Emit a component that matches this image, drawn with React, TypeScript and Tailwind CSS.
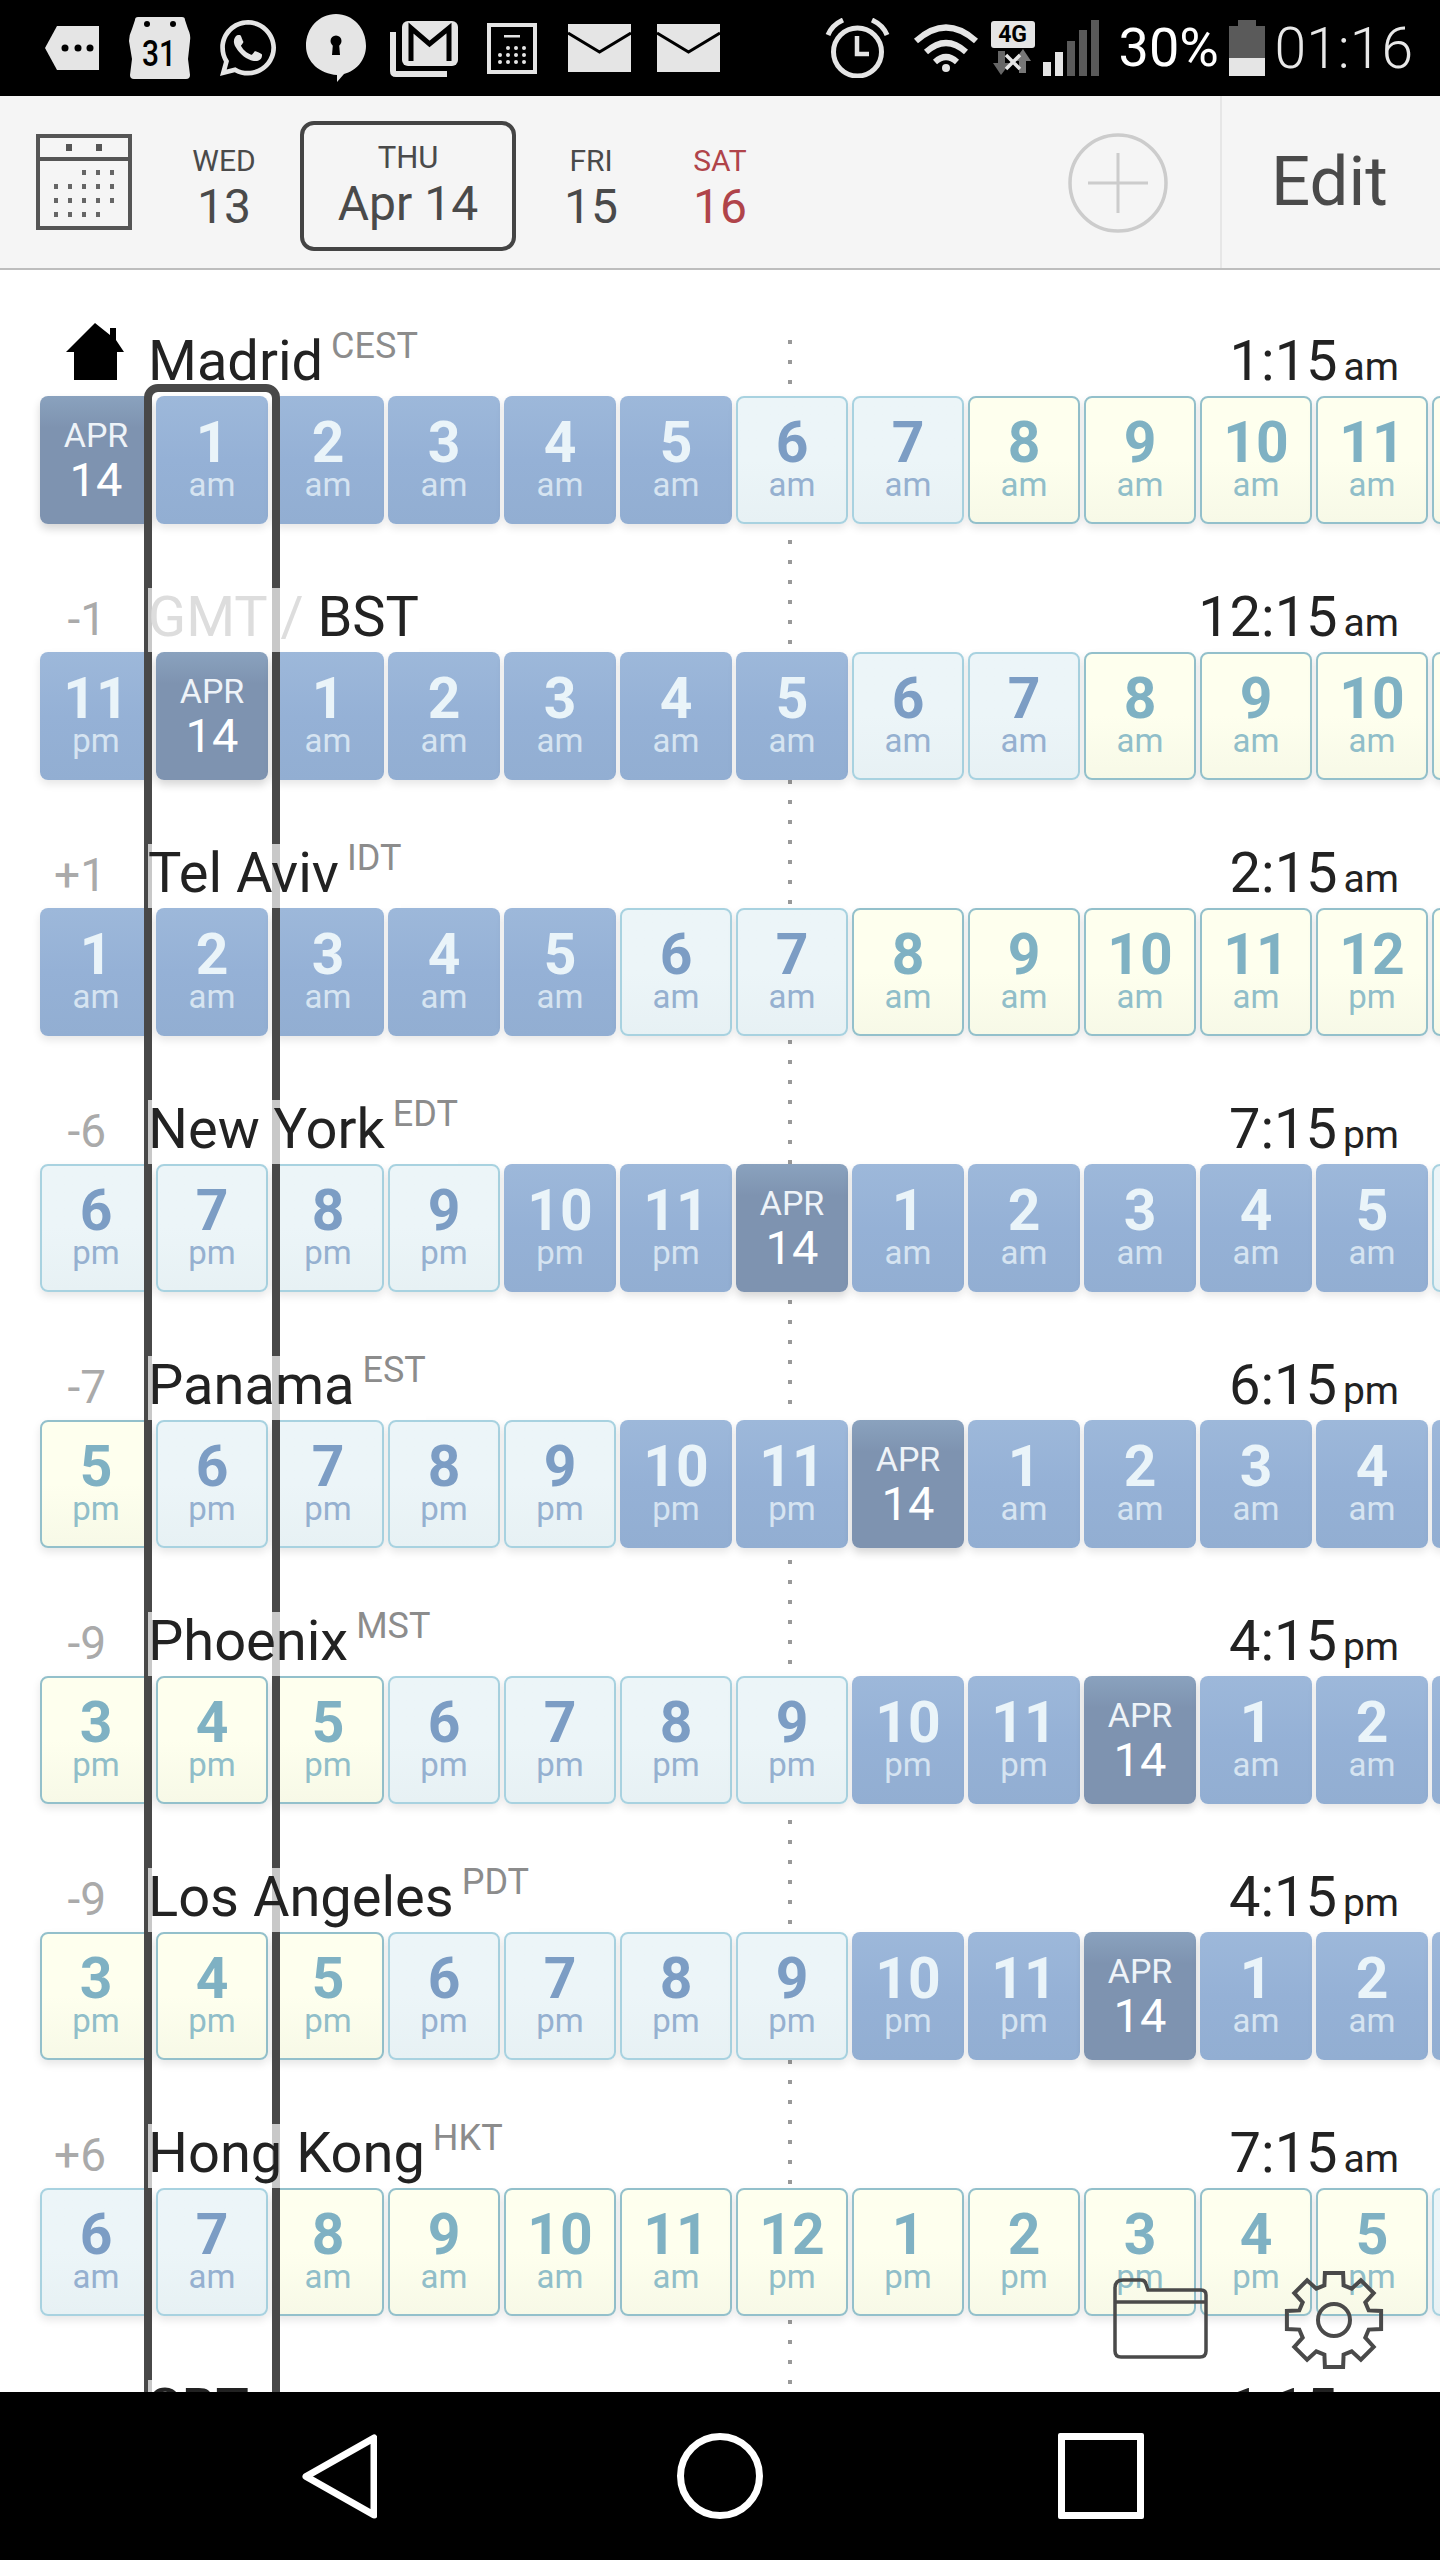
import { FaWhatsapp } from 'react-icons/fa';

const ROBOTO = { fontFamily: 'Roboto, "Noto Sans", sans-serif' };

interface CellProps {
  hour: number;
}

// hour is 0-23 local time for the column
function Cell({ hour }: CellProps) {
  const h = ((hour % 24) + 24) % 24;
  if (h === 0) {
    return (
      <div className="relative z-10 flex flex-col items-center w-[112px] h-[128px] shrink-0 rounded-[8px] bg-gradient-to-b from-[#8aa2be] to-[#7e93b0] to-25% shadow-[0_5px_9px_rgba(0,0,0,0.16)] text-white">
        <span className="text-[34px] leading-[38px] mt-[20px] text-[#eef3f8]">APR</span>
        <span className="text-[47px] leading-[46px] mt-[3px]">14</span>
      </div>
    );
  }
  const label = h % 12 === 0 ? 12 : h % 12;
  const suffix = h < 12 ? 'am' : 'pm';
  const isNight = h < 6 || h >= 22;
  const isDay = h >= 8 && h < 18;

  let box = 'border-[#a8d2e0] from-[#ecf5f8] via-[#ecf5f8] to-[#e7f1f4]';
  let num = 'text-[#7c9dc4]';
  let sub = 'text-[#95b0d0]';
  if (isNight) {
    box = 'border-transparent bg-origin-border from-[#9db8da] via-[#95b1d6] to-[#92aed2]';
    num = 'text-[#eaf4f9]';
    sub = 'text-[#d6e4f1]';
  } else if (isDay) {
    box = 'border-[#93c0cb] from-[#feffee] via-[#feffee] to-[#f7f9e7]';
    num = 'text-[#7fb1c3]';
    sub = 'text-[#90bec9]';
  }

  return (
    <div
      className={`relative z-10 flex flex-col items-center w-[112px] h-[128px] shrink-0 rounded-[8px] border-2 bg-gradient-to-b shadow-[0_4px_8px_rgba(0,0,0,0.1)] ${box}`}
    >
      <span className={`absolute top-[13px] text-[57px] leading-[64px] font-bold ${num}`}>{label}</span>
      <span className={`absolute top-[67px] text-[33px] leading-[40px] ${sub}`}>{suffix}</span>
    </div>
  );
}

function HomeIcon() {
  return (
    <svg viewBox="0 0 58 57" className="w-[58px] h-[57px] -mt-[9px]">
      <path d="M29 0 L44 12 V5 H50 V17 L58 29 H51 V57 H8 V29 H0 Z" fill="#000" />
    </svg>
  );
}

interface RowProps {
  offset?: string;
  name: React.ReactNode;
  zone?: string;
  time: string;
  period: string;
  startHour: number;
  home?: boolean;
}

function ZoneRow({ offset, name, zone, time, period, startHour, home }: RowProps) {
  const hours = Array.from({ length: 13 }, (_, i) => startHour + i);
  return (
    <div className="h-[256px] shrink-0">
      <div className="flex h-16 items-start">
        <div className="w-[148px] shrink-0 flex justify-end pr-[42px] text-[46px] leading-[62px] text-[#aaaaaa] relative z-30">
          {home ? (
            <span className="mr-[-18px]">
              <HomeIcon />
            </span>
          ) : (
            offset
          )}
        </div>
        <div className={`relative z-30 flex h-16 ${home ? '' : 'bg-white/70'}`}>
          <span className="text-[56px] leading-[59px] text-[#222222] whitespace-nowrap">{name}</span>
          {zone && <span className="ml-[8px] -mt-[8px] text-[36px] leading-[44px] text-[#8c8c8c]">{zone}</span>}
        </div>
        <div className="relative z-30 ml-auto pr-[41px] flex items-baseline text-[#222222]">
          <span className="text-[56px] leading-[59px]">{time}</span>
          <span className="ml-[6px] text-[39px] leading-[59px]">{period}</span>
        </div>
      </div>
      <div className="flex gap-1 pl-10 w-[1600px]">
        {hours.map((h) => (
          <Cell key={h} hour={h} />
        ))}
      </div>
    </div>
  );
}

function StatusBar() {
  const light = '#e5e5e5';
  return (
    <div className="flex items-center h-24 bg-black pl-[45px] pr-[27px] shrink-0 text-[#e8e8e8]">
      <svg viewBox="0 0 54 44" className="w-[54px] h-[44px]">
        <path d="M12 0H54V44H12L0 22Z" fill={light} />
        <circle cx="20" cy="22" r="3.500" fill="#000" />
        <circle cx="33" cy="22" r="3.500" fill="#000" />
        <circle cx="45" cy="22" r="3.500" fill="#000" />
      </svg>
      <svg viewBox="0 0 62 62" className="w-[62px] h-[62px] ml-[30px]">
        <path d="M6 3Q6 0 9 0H53Q56 0 56 3L59 12Q62 18 61 24L59 42L61 58Q61 62 57 62H5Q1 62 1 58L3 42L0 24Q0 18 3 12Z" fill={light} />
        <circle cx="18" cy="7" r="3" fill="#000" />
        <circle cx="44" cy="7" r="3" fill="#000" />
        <text x="30" y="49" textAnchor="middle" fontSize="37" fontWeight="500" fill="#000" textLength="34" lengthAdjust="spacingAndGlyphs" style={ROBOTO}>31</text>
      </svg>
      <FaWhatsapp className="w-[62px] h-[64px] ml-[26px]" style={{ color: light }} />
      <svg viewBox="0 0 60 68" className="w-[60px] h-[68px] ml-[27px]">
        <path d="M30 0C47 0 60 14 60 32C60 46 50 57 38 60L31 68V61C14 60 0 48 0 32C0 14 13 0 30 0Z" fill={light} />
        <circle cx="30" cy="27" r="5.500" fill="#000" />
        <path d="M27 29H33L34 41H26Z" fill="#000" />
      </svg>
      <svg viewBox="0 0 68 57" className="w-[68px] h-[57px] ml-[24px]">
        <path d="M3 12V51Q3 54 6 54H57" fill="none" stroke={light} strokeWidth="6" />
        <rect x="12" y="1" width="56" height="45" rx="6" fill={light} />
        <path d="M21 41V8L39.500 24L59 8V41" fill="none" stroke="#000" strokeWidth="5" />
      </svg>
      <svg viewBox="0 0 50 51" className="w-[50px] h-[51px] ml-[29px]">
        <rect x="2" y="2" width="46" height="47" fill="none" stroke={light} strokeWidth="4" />
        <rect x="17" y="12" width="16" height="2.500" fill={light} />
        {[0, 1, 2].map((r) =>
          [0, 1, 2, 3].map((c) =>
            r === 0 && c === 0 ? null : (
              <circle key={`${r}-${c}`} cx={13 + c * 8} cy={25 + r * 7} r="2" fill={light} />
            ),
          ),
        )}
      </svg>
      {[0, 1].map((i) => (
        <svg key={i} viewBox="0 0 63 48" className={`w-[63px] h-[48px] ${i === 0 ? 'ml-[31px]' : 'ml-[26px]'}`}>
          <rect width="63" height="48" fill={light} />
          <path d="M0 9L31.500 28L63 9" fill="none" stroke="#000" strokeWidth="3" />
        </svg>
      ))}
      <svg viewBox="0 0 65 60" className="w-[65px] h-[60px] ml-auto">
        <circle cx="32.500" cy="34" r="24" fill="none" stroke={light} strokeWidth="5" />
        <path d="M32 18V36H44" fill="none" stroke={light} strokeWidth="4.500" />
        <path d="M3 17Q7 7 18 2M62 17Q58 7 47 2" fill="none" stroke={light} strokeWidth="5" />
      </svg>
      <svg viewBox="0 0 66 48" className="w-[66px] h-[48px] ml-[23px]">
        <path d="M3 17Q33 -10 63 17M13 28Q33 10 53 28M22 38Q33 28 44 38" fill="none" stroke={light} strokeWidth="6" />
        <circle cx="33" cy="44" r="4" fill={light} />
      </svg>
      <div className="flex flex-col items-center ml-[12px] w-[44px]">
        <span className="flex items-center justify-center w-[44px] h-[27px] rounded-[3px] bg-[#e5e5e5] text-black text-[23px] leading-none font-bold" style={ROBOTO}>4G</span>
        <svg viewBox="0 0 40 26" className="w-[40px] h-[26px] mt-[1px]">
          <path d="M8 26L0 14H5V2H12V14H17Z" fill="#666" />
          <path d="M30 0L38 12H33V24H26V12H21Z" fill="#777" />
          <path d="M13 6L27 20M27 6L13 20" stroke={light} strokeWidth="3.500" />
        </svg>
      </div>
      <svg viewBox="0 0 56 56" className="w-[56px] h-[56px] ml-[8px]">
        <rect x="0" y="42" width="8" height="14" fill={light} />
        <rect x="12" y="32" width="8" height="24" fill={light} />
        <rect x="24" y="21" width="8" height="35" fill="#5a5a5a" />
        <rect x="36" y="10" width="8" height="46" fill="#5a5a5a" />
        <rect x="48" y="0" width="8" height="56" fill="#5a5a5a" />
      </svg>
      <span className="ml-[20px] w-[94px] text-[54px] leading-none text-white whitespace-nowrap">30%</span>
      <div className="flex flex-col items-center w-[36px] h-[56px] ml-[16px]">
        <div className="w-[18px] h-[6px] bg-[#5a5a5a]" />
        <div className="w-[36px] h-[32px] bg-[#5a5a5a]" />
        <div className="w-[36px] h-[18px] bg-[#e5e5e5]" />
      </div>
      <span className="ml-[10px] text-[57px] leading-none font-light whitespace-nowrap">01:16</span>
    </div>
  );
}

function DayCol({ name, day, red }: { name: string; day: string; red?: boolean }) {
  return (
    <div className={`flex flex-col items-center w-[100px] shrink-0 pt-[12px] ${red ? 'text-[#b0444a]' : 'text-[#4a4a4a]'}`}>
      <span className="text-[30px] leading-[38px]">{name}</span>
      <span className="text-[48px] leading-[54px]">{day}</span>
    </div>
  );
}

function Header() {
  const dots = [
    [0, 0, 1, 1, 1],
    [1, 1, 1, 1, 1],
    [1, 1, 1, 1, 1],
    [1, 1, 1, 1, 0],
  ];
  return (
    <div className="flex items-center h-[174px] shrink-0 bg-[#f5f5f5] border-b-2 border-[#bdbdbd]">
      <svg viewBox="0 0 96 96" className="w-[96px] h-[96px] ml-[36px] shrink-0">
        <rect x="2" y="2" width="92" height="92" fill="none" stroke="#555" strokeWidth="4" />
        <path d="M2 25H94" stroke="#555" strokeWidth="4" />
        <rect x="30" y="10" width="6" height="7" fill="#555" />
        <rect x="60" y="10" width="6" height="7" fill="#555" />
        {dots.map((row, r) =>
          row.map((on, c) =>
            on ? <rect key={`${r}${c}`} x={18 + c * 14} y={36 + r * 14} width="4" height="5" fill="#666" /> : null,
          ),
        )}
      </svg>
      <div className="ml-[42px]">
        <DayCol name="WED" day="13" />
      </div>
      <div className="flex flex-col items-center justify-center w-[216px] h-[130px] mt-[8px] ml-[26px] shrink-0 border-4 border-[#444444] rounded-[14px] text-[#4a4a4a]">
        <span className="text-[31px] leading-[36px]">THU</span>
        <span className="text-[48px] leading-[56px]">Apr 14</span>
      </div>
      <div className="ml-[25px]">
        <DayCol name="FRI" day="15" />
      </div>
      <div className="ml-[29px]">
        <DayCol name="SAT" day="16" red />
      </div>
      <svg viewBox="0 0 100 100" className="w-[100px] h-[100px] mt-[2px] ml-[298px] shrink-0">
        <circle cx="50" cy="50" r="48" fill="none" stroke="#cccccc" strokeWidth="3.500" />
        <path d="M50 20V80M20 50H80" stroke="#cccccc" strokeWidth="3" />
      </svg>
      <div className="flex items-center h-full w-[220px] ml-[52px] pl-[49px] border-l-2 border-[#e6e6e6]">
        <span className="text-[69px] leading-none text-[#4a4a4a] -mt-[2px]">Edit</span>
      </div>
    </div>
  );
}

// teeth of the settings gear, stroked outline
function gearPath() {
  const pts: string[] = [];
  const cx = 50;
  const cy = 50;
  for (let i = 0; i < 8; i++) {
    const a = (i * Math.PI) / 4 - Math.PI / 2;
    const spots: [number, number][] = [
      [-0.27, 36],
      [-0.19, 48],
      [0.19, 48],
      [0.27, 36],
    ];
    spots.forEach(([da, r]) => {
      pts.push(`${(cx + r * Math.cos(a + da)).toFixed(1)} ${(cy + r * Math.sin(a + da)).toFixed(1)}`);
    });
  }
  return `M${pts.join('L')}Z`;
}

export default function App() {
  return (
    <div className="flex flex-col w-[1440px] h-[2560px] overflow-hidden bg-white" style={ROBOTO}>
      <StatusBar />
      <Header />
      <main className="relative flex-1 overflow-hidden bg-white pt-[62px]">
        {/* dotted "now" line */}
        <div className="absolute left-[788px] top-[70px] bottom-0 w-1 bg-[repeating-linear-gradient(to_bottom,#999999_0,#999999_4px,transparent_4px,transparent_20px)]" />
        {/* selected column frame */}
        <div className="absolute z-20 left-[144px] top-[114px] -bottom-4 w-[136px] border-[8px] border-[#484848] rounded-t-[14px]" />

        <ZoneRow home name="Madrid" zone="CEST" time="1:15" period="am" startHour={0} />
        <ZoneRow
          offset="-1"
          name={
            <>
              <span className="text-[#dddddd]">GMT / </span>BST
            </>
          }
          time="12:15"
          period="am"
          startHour={23}
        />
        <ZoneRow offset="+1" name="Tel Aviv" zone="IDT" time="2:15" period="am" startHour={1} />
        <ZoneRow offset="-6" name="New York" zone="EDT" time="7:15" period="pm" startHour={18} />
        <ZoneRow offset="-7" name="Panama" zone="EST" time="6:15" period="pm" startHour={17} />
        <ZoneRow offset="-9" name="Phoenix" zone="MST" time="4:15" period="pm" startHour={15} />
        <ZoneRow offset="-9" name="Los Angeles" zone="PDT" time="4:15" period="pm" startHour={15} />
        <ZoneRow offset="+6" name="Hong Kong" zone="HKT" time="7:15" period="am" startHour={6} />
        <ZoneRow offset="+11" name="SBT" time="1:15" period="pm" startHour={12} />

        <svg viewBox="0 0 95 81" className="absolute z-40 left-[1113px] top-[2008px] w-[95px] h-[81px]">
          <path
            d="M2 10Q2 2 10 2H28Q32 2 33 6L35 12H88Q93 12 93 17V73Q93 79 87 79H8Q2 79 2 73ZM2 24H93"
            fill="none"
            stroke="#4a4a4a"
            strokeWidth="3.500"
          />
        </svg>
        <svg viewBox="0 0 100 100" className="absolute z-40 left-[1284px] top-[2000px] w-[100px] h-[100px]">
          <path d={gearPath()} fill="none" stroke="#4a4a4a" strokeWidth="4" />
          <circle cx="50" cy="50" r="16" fill="none" stroke="#4a4a4a" strokeWidth="4" />
        </svg>
      </main>
      <nav className="flex items-center h-[168px] shrink-0 bg-black pl-[302px]">
        <svg viewBox="0 0 75 85" className="w-[75px] h-[85px]">
          <path d="M72 4V81L4 42.500Z" fill="none" stroke="#fff" strokeWidth="7" strokeLinejoin="round" />
        </svg>
        <div className="w-[86px] h-[86px] ml-[300px] rounded-full border-[7px] border-white" />
        <div className="w-[86px] h-[86px] ml-[295px] rounded-[2px] border-[7px] border-white" />
      </nav>
    </div>
  );
}
